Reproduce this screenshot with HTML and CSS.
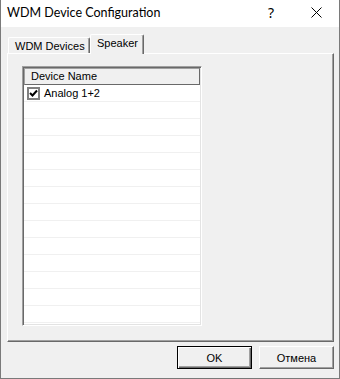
FILE: index.html
```html
<!DOCTYPE html>
<html lang="en">
<head>
    <meta charset="UTF-8">
    <meta name="viewport" content="width=device-width, initial-scale=1.0">
    <title>WDM Device Configuration</title>
    <link rel="stylesheet" href="styles.css">
</head>
<body>
    <div class="window">
        <div class="titlebar">
            <span class="title">WDM Device Configuration</span>
            <span class="help">?</span>
            <span class="close">
                <svg width="11" height="11" viewBox="0 0 11 11">
                    <path d="M0.5 0.5 L10.5 10.5 M10.5 0.5 L0.5 10.5" stroke="#000" stroke-width="1" fill="none"/>
                </svg>
            </span>
        </div>

        <div class="client">
            <div class="tabs">
                <div class="tab">WDM Devices</div>
                <div class="tab active">Speaker</div>
            </div>

            <div class="panel">
                <div class="list">
                    <div class="list-header">Device Name</div>
                    <div class="rows">
                        <div class="row">
                            <span class="check">
                                <svg width="9" height="9" viewBox="0 0 9 9">
                                    <path d="M1 4 L3.5 6.5 L8 1.5" stroke="#000" stroke-width="2" fill="none"/>
                                </svg>
                            </span>
                            <span>Analog 1+2</span>
                        </div>
                        <div class="row"></div>
                        <div class="row"></div>
                        <div class="row"></div>
                        <div class="row"></div>
                        <div class="row"></div>
                        <div class="row"></div>
                        <div class="row"></div>
                        <div class="row"></div>
                        <div class="row"></div>
                        <div class="row"></div>
                        <div class="row"></div>
                        <div class="row"></div>
                        <div class="row"></div>
                    </div>
                </div>
            </div>

            <div class="buttons">
                <button class="btn default">OK</button>
                <button class="btn">Отмена</button>
            </div>
        </div>
    </div>
</body>
</html>
```

FILE: styles.css
```css
body {
    margin: 0;
    padding: 0;
    font-family: "Liberation Sans", Arial, sans-serif;
    font-size: 11px;
    color: #000;
}
.window {
    width: 340px;
    height: 379px;
    box-sizing: border-box;
    border: 1px solid #7a7a7a;
    border-top: none;
    display: flex;
    flex-direction: column;
    background: #f0f0f0;
}
.titlebar {
    height: 27px;
    background: #fff;
    display: flex;
    align-items: center;
    font-family: Lato, "Noto Sans", sans-serif;
    font-size: 12.5px;
}
.title {
    padding-left: 6px;
    flex: 1;
    padding-bottom: 2px;
}
.help {
    width: 14px;
    font-family: "Noto Sans", sans-serif;
    font-size: 14px;
    margin-right: 23px;
    padding-bottom: 3px;
}
.close {
    width: 22px;
    margin-right: 12px;
    display: flex;
    justify-content: center;
    padding-bottom: 2px;
}
.client {
    flex: 1;
    padding: 7px 5px 0 6px;
    display: flex;
    flex-direction: column;
}
.tabs {
    display: flex;
    align-items: flex-end;
    height: 19px;
    padding-left: 1px;
    position: relative;
    z-index: 1;
}
.tab {
    box-sizing: border-box;
    height: 16px;
    width: 82px;
    padding: 2px 0 0 6px;
    border-top: 1px solid #fff;
    border-left: 1px solid #fff;
    border-right: 1px solid #696969;
    box-shadow: inset -1px 0 #a0a0a0;
    border-radius: 2px 2px 0 0;
}
.tab.active {
    height: 20px;
    width: 54px;
    margin-bottom: -1px;
    padding: 2px 0 0 6px;
    background: #f0f0f0;
}
.panel {
    box-sizing: border-box;
    height: 289px;
    border-top: 1px solid #fff;
    border-left: 1px solid #fff;
    border-right: 1px solid #696969;
    border-bottom: 1px solid #696969;
    box-shadow: inset -1px -1px #a0a0a0;
    padding: 12px 0 0 14px;
}
.list {
    box-sizing: border-box;
    width: 180px;
    height: 260px;
    border-top: 1px solid #a0a0a0;
    border-left: 1px solid #a0a0a0;
    border-right: 1px solid #fff;
    border-bottom: 1px solid #fff;
    box-shadow: inset 1px 1px #696969, inset -1px -1px #e3e3e3;
    padding: 1px;
    background: #fff;
    overflow: hidden;
}
.list-header {
    box-sizing: border-box;
    height: 17px;
    width: 176px;
    background: #f0f0f0;
    border: 1px solid #a0a0a0;
    border-right-color: #696969;
    border-bottom-color: #696969;
    padding: 1px 0 0 6px;
}
.row {
    box-sizing: border-box;
    height: 17px;
    border-bottom: 1px solid #f0f0f0;
    display: flex;
    align-items: center;
    padding-left: 3px;
}
.check {
    box-sizing: border-box;
    width: 13px;
    height: 13px;
    border: 2px solid #808080;
    background: #fff;
    display: flex;
    align-items: center;
    justify-content: center;
    margin-right: 4px;
}
.buttons {
    display: flex;
    justify-content: flex-end;
    gap: 7px;
    margin-top: 4px;
}
.btn {
    box-sizing: border-box;
    width: 75px;
    height: 23px;
    font-family: "Liberation Sans", Arial, sans-serif;
    font-size: 11px;
    color: #000;
    background: #f0f0f0;
    border-top: 1px solid #fff;
    border-left: 1px solid #fff;
    border-right: 1px solid #696969;
    border-bottom: 1px solid #696969;
    box-shadow: inset -1px -1px #a0a0a0;
    padding: 0;
}
.btn.default {
    border: 1px solid #000;
    box-shadow: inset 1px 1px #fff, inset -1px -1px #696969, inset -2px -2px #a0a0a0;
}
```
